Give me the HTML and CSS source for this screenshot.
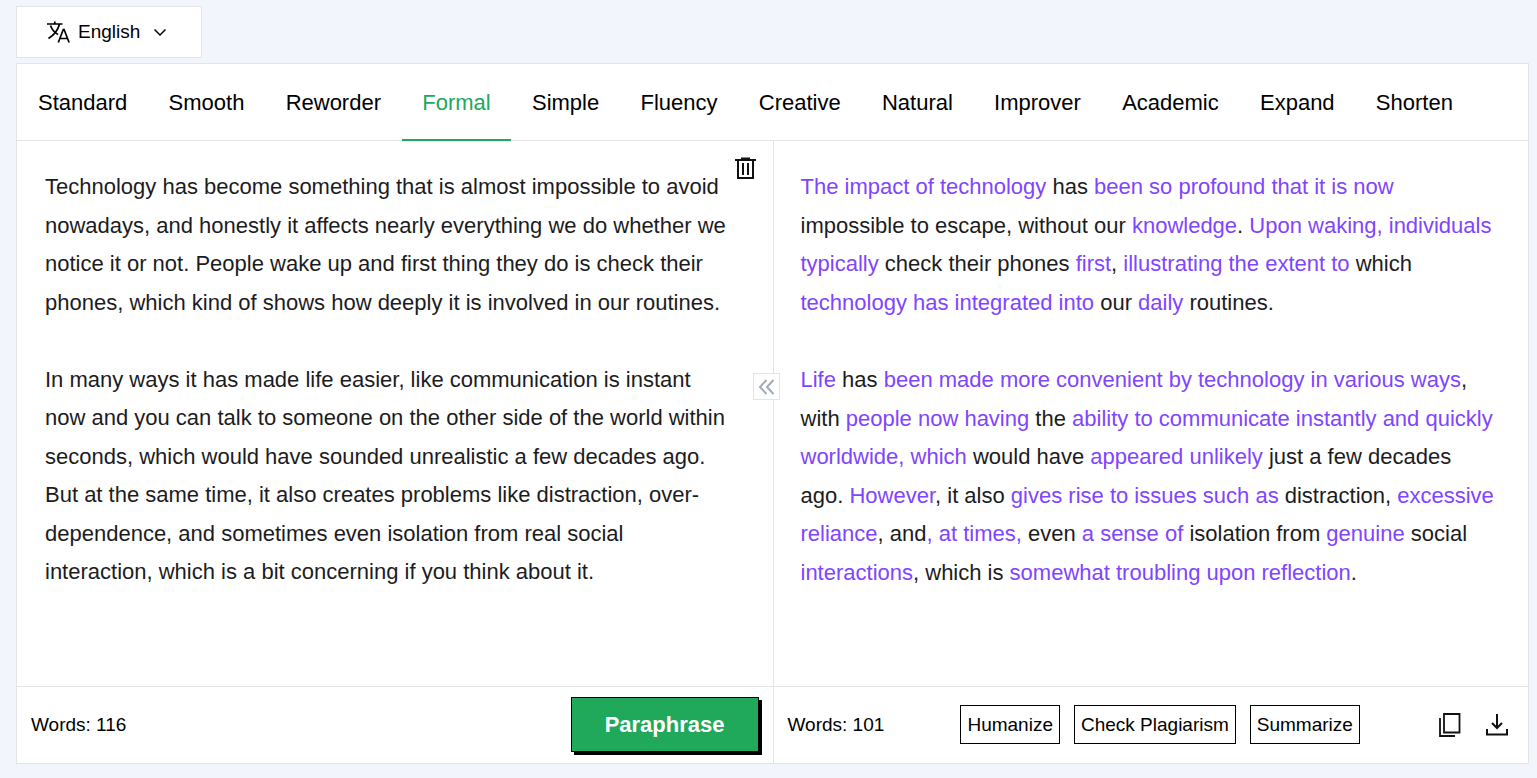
FILE: index.html
```html
<!DOCTYPE html>
<html lang="en">
<head>
    <meta charset="UTF-8">
    <meta name="viewport" content="width=device-width, initial-scale=1.0">
    <title>Paraphrasing Tool</title>
    <link rel="stylesheet" href="styles.css">
</head>
<body>
    <label class="language">
        <svg width="24" height="24" viewBox="0 0 24 24" fill="none" stroke="currentColor" stroke-width="1.7" aria-hidden="true">
            <path d="M1 4h15.500M8.800 1.500V4M4.500 5.500c1.400 4 4 7 7.500 9M13.500 4C12 10 8 15 2.500 18.500M12.300 22.500 17.300 9.500h.8l5 13M14 18.500h7.500"/>
        </svg>
        <select class="language-select" aria-label="Language">
            <option>English</option>
        </select>
        <svg class="chevron" width="12" height="12" viewBox="0 0 12 12" fill="none" stroke="currentColor" stroke-width="1.5" aria-hidden="true">
            <path d="M0.500 3.500 6 9l5.500-5.500"/>
        </svg>
    </label>

    <main class="tool">
        <nav class="modes">
            <button class="mode">Standard</button>
            <button class="mode">Smooth</button>
            <button class="mode">Reworder</button>
            <button class="mode active">Formal</button>
            <button class="mode">Simple</button>
            <button class="mode">Fluency</button>
            <button class="mode">Creative</button>
            <button class="mode">Natural</button>
            <button class="mode">Improver</button>
            <button class="mode">Academic</button>
            <button class="mode">Expand</button>
            <button class="mode">Shorten</button>
        </nav>

        <div class="panes">
            <section class="pane pane-input">
                <div class="pane-body">
                    <textarea class="source-text" aria-label="Text to paraphrase" spellcheck="false">Technology has become something that is almost impossible to avoid nowadays, and honestly it affects nearly everything we do whether we notice it or not. People wake up and first thing they do is check their phones, which kind of shows how deeply it is involved in our routines.

In many ways it has made life easier, like communication is instant now and you can talk to someone on the other side of the world within seconds, which would have sounded unrealistic a few decades ago. But at the same time, it also creates problems like distraction, over-dependence, and sometimes even isolation from real social interaction, which is a bit concerning if you think about it.</textarea>
                    <button class="icon-btn delete-btn" aria-label="Delete text">
                        <svg width="21" height="24" viewBox="0 0 21 24" fill="none" stroke="currentColor" stroke-width="2" aria-hidden="true">
                            <path d="M0 4h21M6 2.500h9M3 4v18h15V4"/>
                            <path d="M8 7v12M13 7v12" stroke-width="2"/>
                        </svg>
                    </button>
                </div>
                <div class="pane-footer">
                    <span>Words: 116</span>
                    <button class="paraphrase-btn">Paraphrase</button>
                </div>
                <button class="collapse-btn" aria-label="Collapse">
                    <svg width="17" height="16" viewBox="0 0 17 16" fill="none" stroke="currentColor" stroke-width="2" aria-hidden="true">
                        <path d="M8.500 1 2 8l6.500 7M15.500 1 9 8l6.500 7"/>
                    </svg>
                </button>
            </section>

            <section class="pane pane-output">
                <div class="pane-body result">
                    <p><mark>The impact of technology</mark> has <mark>been so profound that it is now</mark> impossible to escape, without our <mark>knowledge</mark>. <mark>Upon waking, individuals typically</mark> check their phones <mark>first</mark>, <mark>illustrating the extent to</mark> which <mark>technology has integrated into</mark> our <mark>daily</mark> routines.</p>
                    <p><mark>Life</mark> has <mark>been made more convenient by technology in various ways</mark>, with <mark>people now having</mark> the <mark>ability to communicate instantly and quickly worldwide, which</mark> would have <mark>appeared unlikely</mark> just a few decades ago. <mark>However</mark>, it also <mark>gives rise to issues such as</mark> distraction, <mark>excessive reliance</mark>, and<mark>, at times,</mark> even <mark>a sense of</mark> isolation from <mark>genuine</mark> social <mark>interactions</mark>, which is <mark>somewhat troubling upon reflection</mark>.</p>
                </div>
                <div class="pane-footer">
                    <span>Words: 101</span>
                    <div class="actions">
                        <button class="action-btn">Humanize</button>
                        <button class="action-btn">Check Plagiarism</button>
                        <button class="action-btn">Summarize</button>
                    </div>
                    <div class="exports">
                        <button class="icon-btn" aria-label="Copy">
                            <svg width="24" height="24" viewBox="0 0 24 24" fill="none" stroke="currentColor" stroke-width="1.8" aria-hidden="true">
                                <path d="M6 1h15.500v18.500H6zM2 5v18h15"/>
                            </svg>
                        </button>
                        <button class="icon-btn" aria-label="Download">
                            <svg width="24" height="24" viewBox="0 0 24 24" fill="none" stroke="currentColor" stroke-width="2" aria-hidden="true">
                                <path d="M12 1v14M7 10l5 5 5-5M2 16v5.500h20V16"/>
                            </svg>
                        </button>
                    </div>
                </div>
            </section>
        </div>
    </main>
</body>
</html>
```

FILE: styles.css
```css
* {
    box-sizing: border-box;
}

body {
    margin: 0;
    padding: 6px 8px 12px 16px;
    background: #f2f6fc;
    color: #000;
    font-family: "Liberation Sans", Arial, sans-serif;
    font-size: 19px;
}

button,
select,
textarea {
    font: inherit;
    color: inherit;
    margin: 0;
    border: none;
    background: none;
}

button {
    cursor: pointer;
}

svg {
    display: block;
}

.language {
    display: flex;
    align-items: center;
    width: fit-content;
    height: 52px;
    padding: 0 35px 0 29px;
    background: #fff;
    border: 1px solid #e4e4e7;
    margin-bottom: 5px;
}

.language-select {
    appearance: none;
    padding: 0 13px 2px 8px;
    outline: none;
}

.tool {
    background: #fff;
    border: 1px solid #e4e4e7;
}

.modes {
    display: flex;
    justify-content: space-between;
    padding: 0 55px 0 1px;
    border-bottom: 1px solid #e4e4e7;
}

.mode {
    height: 77px;
    margin-bottom: -1px;
    padding: 0 20px;
    border-top: 2px solid transparent;
    border-bottom: 2px solid transparent;
    font-size: 22px;
    white-space: nowrap;
}

.mode.active {
    color: #21a95b;
    border-bottom-color: #21a95b;
}

.panes {
    display: grid;
    grid-template-columns: 1fr 1fr;
}

.pane {
    display: flex;
    flex-direction: column;
    min-width: 0;
}

.pane-input {
    position: relative;
}

.pane-output {
    border-left: 1px solid #e4e4e7;
}

.pane-body {
    display: flex;
    flex: 1;
    min-height: 545px;
    color: #1c1c1e;
    font-size: 22px;
    line-height: 1.75;
}

.source-text {
    flex: 1;
    min-width: 0;
    padding: 27px 0 0 28px;
    resize: none;
    outline: none;
    overflow: hidden;
}

.icon-btn {
    padding: 0;
    color: #111;
}

.delete-btn {
    align-self: flex-start;
    margin: 15px 17px 0 4px;
}

.result {
    display: block;
    padding: 27px 32px 0 27px;
}

.result p {
    margin: 0 0 39px;
}

.result mark {
    background: none;
    color: #8045ff;
}

.collapse-btn {
    position: absolute;
    z-index: 1;
    top: 232px;
    right: -7px;
    display: flex;
    align-items: center;
    justify-content: center;
    width: 27px;
    height: 27px;
    padding: 0;
    background: #fff;
    border: 1px solid #e4e4e7;
    color: #a3abb8;
}

.pane-footer {
    display: flex;
    align-items: center;
    justify-content: space-between;
    height: 77px;
    padding: 0 14px 1px;
    border-top: 1px solid #e4e4e7;
}

.paraphrase-btn {
    height: 55px;
    padding: 0 33px;
    background: #21a95b;
    border: 1px solid #000;
    box-shadow: 3px 3px 0 #000;
    color: #fff;
    font-size: 22px;
    font-weight: bold;
}

.actions {
    display: flex;
    gap: 14px;
    margin-right: 2px;
}

.action-btn {
    height: 39px;
    padding: 0 6px;
    border: 1px solid #000;
}

.exports {
    display: flex;
    gap: 23px;
    padding-right: 5px;
}
```
